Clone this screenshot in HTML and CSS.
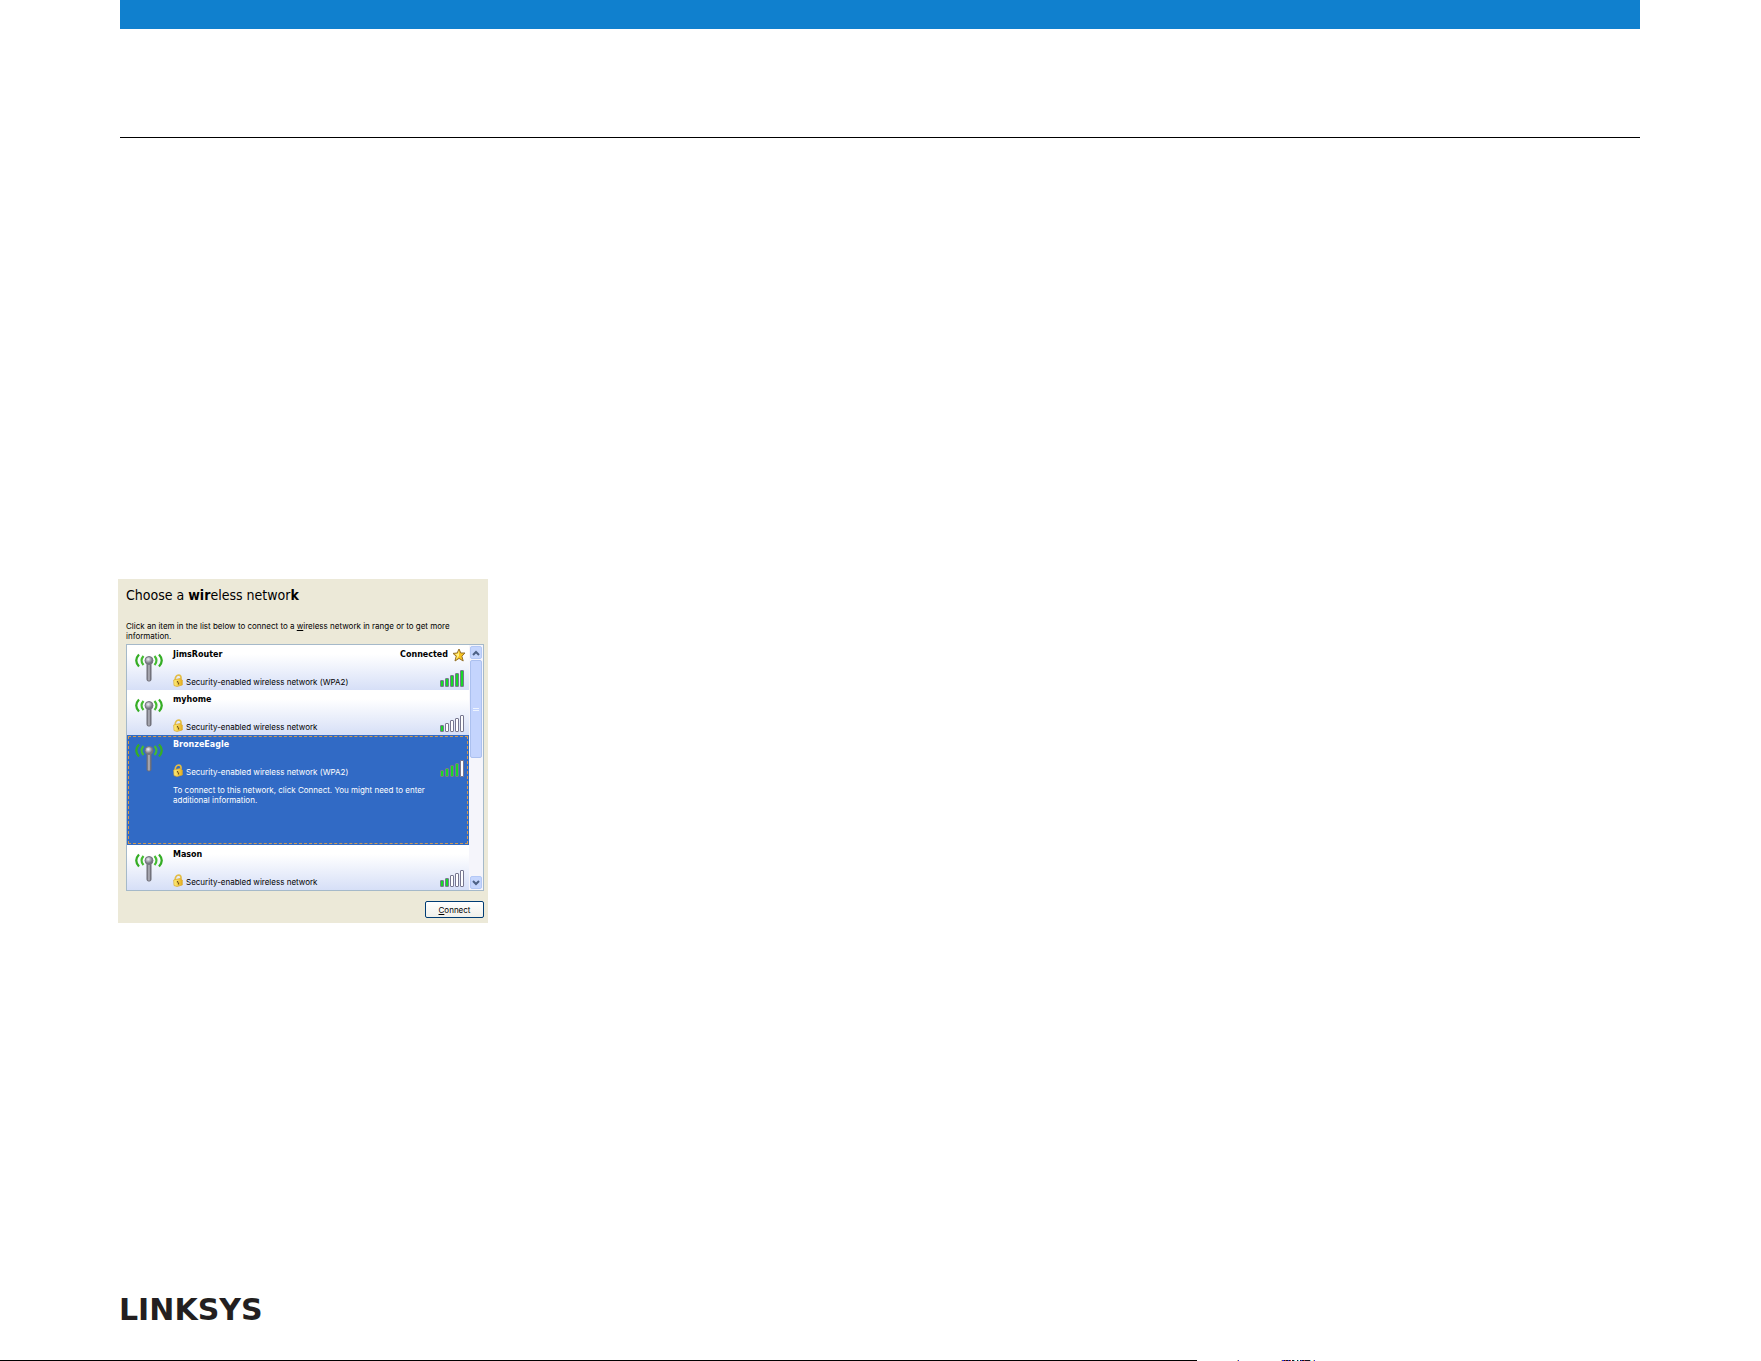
FILE: index.html
```html
<!DOCTYPE html>
<html lang="en">
<head>
<meta charset="utf-8">
<title>Choose a wireless network</title>
<link rel="stylesheet" href="styles.css">
</head>
<body>
<svg class="defs" aria-hidden="true">
  <defs>
    <linearGradient id="metal" x1="0" x2="1"><stop offset="0" stop-color="#77777f"/><stop offset=".5" stop-color="#b4b4bd"/><stop offset="1" stop-color="#66666e"/></linearGradient>
    <radialGradient id="ball" cx=".4" cy=".35"><stop offset="0" stop-color="#eeeef6"/><stop offset="1" stop-color="#777782"/></radialGradient>
    <linearGradient id="gold" x1="0" x2="1"><stop offset="0" stop-color="#fff080"/><stop offset="1" stop-color="#e8b01c"/></linearGradient>
    <symbol id="antenna" viewBox="0 0 28 30">
      <path d="M4 1.500Q-1.500 7.500 4 13.500M24 1.500Q29.500 7.500 24 13.500" fill="none" stroke="#35ad25" stroke-width="2.200"/>
      <path d="M8.500 3Q4.500 7.500 8.500 12M19.500 3Q23.500 7.500 19.500 12" fill="none" stroke="#45bb32" stroke-width="2.200"/>
      <rect x="12" y="10" width="4" height="18" rx="1.500" fill="url(#metal)" stroke="#6b6b74"/>
      <circle cx="14" cy="7.500" r="4" fill="url(#ball)" stroke="#74747e"/>
    </symbol>
    <symbol id="lock" viewBox="0 0 10 13">
      <path d="M2 6.500L2.500 3.500Q3.500 1 6 1Q8.500 1.500 8 5" fill="none" stroke="#e3bd45" stroke-width="1.600"/>
      <path d="M.7 6L7 4.500L9.300 6V11L4 12.500L1 11.500Z" fill="url(#gold)" stroke="#d8a82d" stroke-width=".7"/>
      <path d="M4.500 7V8.500M5.500 8.500V10.500" stroke="#73531b" stroke-width="1.200"/>
    </symbol>
    <symbol id="star" viewBox="0 0 14 14">
      <path d="M7 1L8.800 5H13L9.900 8.200L11.200 13L7 10.400L3 13L4.200 8.200L1 5.400L5.200 5Z" fill="#f6c31f" stroke="#94702c"/>
      <path d="M7 2.500V8L4 11.500L5.200 7.800L3 6L6 5.700Z" fill="#fff08a"/>
    </symbol>
  </defs>
</svg>
<div class="page">
  <header class="masthead"></header>
  <main class="content">
    <section class="dialog" aria-labelledby="title">
      <h1 class="title" id="title">Choose a <b>wir</b>eless networ<b>k</b></h1>
      <p class="intro">Click an item in the list below to connect to a <u>w</u>ireless network in range or to get more information.</p>
      <div class="listbox">
        <ul class="networks">
          <li class="network">
            <svg class="antenna"><use href="#antenna"/></svg>
            <div class="details">
              <div class="line"><strong>JimsRouter</strong><strong class="status">Connected</strong><svg class="star"><use href="#star"/></svg></div>
              <div class="line security"><svg class="lock"><use href="#lock"/></svg><span>Security-enabled wireless network (WPA2)</span>
                <span class="signal"><i class="on"></i><i class="on"></i><i class="on"></i><i class="on"></i><i class="on"></i></span></div>
            </div>
          </li>
          <li class="network">
            <svg class="antenna"><use href="#antenna"/></svg>
            <div class="details">
              <div class="line"><strong>myhome</strong></div>
              <div class="line security"><svg class="lock"><use href="#lock"/></svg><span>Security-enabled wireless network</span>
                <span class="signal"><i class="on"></i><i></i><i></i><i></i><i></i></span></div>
            </div>
          </li>
          <li class="network selected">
            <svg class="antenna"><use href="#antenna"/></svg>
            <div class="details">
              <div class="line"><strong>BronzeEagle</strong></div>
              <div class="line security"><svg class="lock"><use href="#lock"/></svg><span>Security-enabled wireless network (WPA2)</span>
                <span class="signal"><i class="on"></i><i class="on"></i><i class="on"></i><i class="on"></i><i></i></span></div>
              <p class="hint">To connect to this network, click Connect. You might need to enter additional information.</p>
            </div>
          </li>
          <li class="network">
            <svg class="antenna"><use href="#antenna"/></svg>
            <div class="details">
              <div class="line"><strong>Mason</strong></div>
              <div class="line security"><svg class="lock"><use href="#lock"/></svg><span>Security-enabled wireless network</span>
                <span class="signal"><i class="on"></i><i class="on"></i><i></i><i></i><i></i></span></div>
            </div>
          </li>
        </ul>
        <div class="scrollbar">
          <button class="arrow" aria-label="Scroll up"><svg viewBox="0 0 8 6"><path d="M1 5L4 2L7 5"/></svg></button>
          <div class="thumb"><span class="grip"></span></div>
          <div class="track"></div>
          <button class="arrow" aria-label="Scroll down"><svg viewBox="0 0 8 6"><path d="M1 1L4 4L7 1"/></svg></button>
        </div>
      </div>
      <div class="actions"><button class="connect"><u>C</u>onnect</button></div>
    </section>
  </main>
  <footer class="footer"><span class="logo">LINKSYS</span></footer>
  <div class="edge"><span class="edge-line"></span>
    <svg class="edge-marks" width="120" height="1" viewBox="0 0 120 1" shape-rendering="crispEdges">
      <path d="M41 .5h1M85 .5h2M91 .5h1M104 .5h1M117 .5h1" stroke="#3030e0"/>
      <path d="M40 .5h1M84 .5h1M116 .5h1" stroke="#f0d060"/>
      <path d="M87 .5h4M92 .5h2M95 .5h2M100 .5h1M103 .5h1M105 .5h2M108 .5h5" stroke="#151520"/>
      <path d="M88 .5h1M93 .5h1M107 .5h1" stroke="#c03030"/><path d="M97 .5h1M101 .5h1M113 .5h1" stroke="#60e0e0"/>
    </svg>
  </div>
</div>
</body>
</html>
```
FILE: styles.css
```css
* { box-sizing: border-box; }
body { margin: 0; background: #fff; color: #000; font: 8px/10px Inter, "DejaVu Sans Condensed", sans-serif; }
h1, p, ul { margin: 0; padding: 0; }
svg { display: block; flex: none; }
button { font: inherit; color: inherit; padding: 0; }
.defs { position: absolute; width: 0; height: 0; }
.page { display: flex; flex-direction: column; min-height: 100vh; }
.masthead { height: 138px; margin: 0 121px 0 120px; border-top: 29px solid #1080ce; border-bottom: 1px solid #000; }
.content { padding: 441px 118px 0; }

.dialog { width: 370px; padding: 8px 4px 5px 8px; background: #ece9d8; }
.title { font: 400 14px/16px "DejaVu Sans Condensed", "DejaVu Sans", sans-serif; }
.intro { margin: 18px 12px 3px 0; }
.listbox { display: flex; border: 1px solid #a5b9c9; background: #fff; }
.networks { flex: 1; list-style: none; }
.network { display: flex; gap: 10px; height: 45px; padding: 4px 3px 0 8px; background: linear-gradient(#fff 20%, #d6dff7); }
.network.selected { height: 110px; color: #fff; background: #316ac5; outline: 1px dashed #d29a50; outline-offset: -2px; }
.antenna { width: 28px; height: 30px; margin-top: 4px; }
.details { flex: 1; }
.line { display: flex; align-items: center; height: 12px; white-space: nowrap; }
.line strong { font-family: "DejaVu Sans", sans-serif; }
.status { margin-left: auto; }
.star { width: 14px; height: 14px; margin-left: 4px; }
.security { height: 17px; margin-top: 9px; align-items: flex-end; }
.lock { width: 10px; height: 13px; margin-right: 3px; }
.signal { display: flex; align-items: flex-end; gap: 1px; height: 17px; margin: 0 2px 0 auto; }
.signal i { width: 4px; height: 7px; border: 1px solid #77778f; border-radius: 1px; background: #fff; }
.signal i:nth-child(2) { height: 9px; }
.signal i:nth-child(3) { height: 12px; }
.signal i:nth-child(4) { height: 14px; }
.signal i:nth-child(5) { height: 17px; }
.signal .on { background: #18d828; }
.hint { margin-top: 8px; padding-right: 30px; }

.scrollbar { display: flex; flex-direction: column; width: 14px; padding: 1px; background: #f5f5fb; }
.arrow { display: grid; place-items: center; height: 13px; border: 1px solid #b4c8f6; border-radius: 2px; background: #c6d6fd; }
.arrow svg { width: 8px; height: 6px; fill: none; stroke: #4d6185; stroke-width: 2px; }
.thumb { display: grid; place-items: center; height: 98px; margin-top: 1px; border: 1px solid #abc0ef; border-radius: 2px; background: #c4d4fd; }
.grip { width: 6px; height: 3px; border: solid #eef4fe; border-width: 1px 0; }
.track { flex: 1; }
.actions { display: flex; justify-content: flex-end; padding-top: 10px; }
.connect { width: 59px; height: 17px; border: 1px solid #003c74; border-radius: 2px; background: linear-gradient(#fff, #f0f0ea); }

.footer { margin-top: auto; padding: 0 119px 32px; }
.logo { display: block; color: #231f20; font: 700 30px/36px "DejaVu Sans", sans-serif; }
.edge { display: flex; height: 1px; }
.edge-line { width: 68%; background: #000; }
```
